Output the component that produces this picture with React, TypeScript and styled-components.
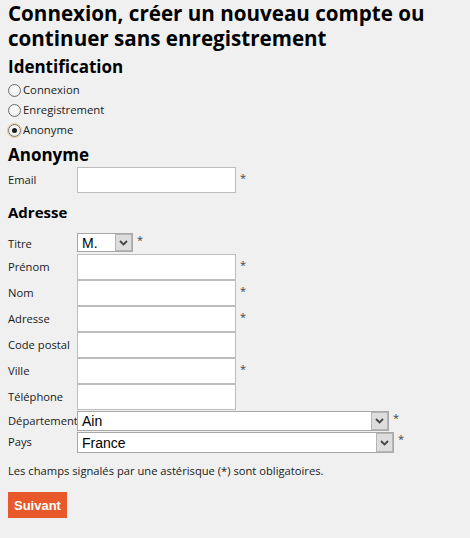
import React from "react";
import styled, { createGlobalStyle } from "styled-components";

const Global = createGlobalStyle`
  html, body { margin: 0; padding: 0; background: #f0f0f0; }
  body { font-family: "Open Sans", "Noto Sans", sans-serif; color: #1a1a1a; }
`;

const Page = styled.div`
  padding: 0 8px 20px 8px;
  width: 454px;
`;

const Title = styled.h1`
  margin: 0;
  padding-top: 1px;
  font-size: 20.6px;
  line-height: 25px;
  font-weight: 700;
  color: #000;
`;

const H2 = styled.h2<{ $size?: number; $mt?: number; $mb?: number }>`
  margin: ${(p) => p.$mt ?? 0}px 0 ${(p) => p.$mb ?? 0}px 0;
  font-size: ${(p) => p.$size ?? 17}px;
  line-height: 22px;
  font-weight: 700;
  color: #000;
`;

const RadioList = styled.div`
  display: flex;
  flex-direction: column;
  margin-top: 1px;
`;

const RadioRow = styled.label`
  display: flex;
  align-items: center;
  height: 20px;
  font-size: 11.3px;
  gap: 2px;
`;

const RadioDot = styled.span<{ $checked?: boolean }>`
  box-sizing: border-box;
  width: 13px;
  height: 13px;
  border-radius: 50%;
  border: 1px solid #6f6f6f;
  background: radial-gradient(circle at 50% 40%, #ffffff 0%, #f0f0f0 60%, #dadada 100%);
  display: inline-flex;
  align-items: center;
  justify-content: center;
  margin-top: 3px;
  outline: ${(p) => (p.$checked ? "1px solid #e2c391" : "none")};
  outline-offset: 0px;
  &::after {
    content: "";
    width: 5px;
    height: 5px;
    border-radius: 50%;
    background: #1b1b1b;
    display: ${(p) => (p.$checked ? "block" : "none")};
  }
`;

const Form = styled.div`
  display: grid;
  grid-template-columns: 69px auto;
  align-items: center;
`;

const Label = styled.div`
  font-size: 11.2px;
  line-height: 14px;
  white-space: nowrap;
`;

const Field = styled.div<{ $mt?: number; $mb?: number }>`
  display: flex;
  align-items: flex-start;
  margin-top: ${(p) => p.$mt ?? 0}px;
  margin-bottom: ${(p) => p.$mb ?? 0}px;
`;

const TextInput = styled.input`
  box-sizing: border-box;
  width: 159px;
  height: 26px;
  border: 1px solid #bdbdbd;
  background: #fff;
  margin: 0;
  padding: 0 3px;
  outline: none;
`;

const Star = styled.span<{ $top?: number }>`
  font-size: 11px;
  color: #444;
  margin-left: 4px;
  line-height: 14px;
  margin-top: ${(p) => p.$top ?? 4}px;
`;

const SelectBox = styled.div<{ $w: number; $h: number }>`
  box-sizing: border-box;
  width: ${(p) => p.$w}px;
  height: ${(p) => p.$h}px;
  display: flex;
  border: 1px solid #a8a8a8;
  background: #fff;
`;

const SelectValue = styled.div`
  flex: 1;
  font-family: "Liberation Sans", Arial, sans-serif;
  font-size: 14px;
  line-height: 16px;
  padding-left: 4px;
  display: flex;
  align-items: center;
  color: #000;
`;

const Arrow = styled.div`
  box-sizing: border-box;
  width: 17px;
  border: 1px solid #b5b5b5;
  background: #dddddd;
  display: flex;
  align-items: center;
  justify-content: center;
`;

const Note = styled.p`
  font-size: 11.2px;
  margin: 10px 0 0 0;
  line-height: 16px;
`;

const Button = styled.button`
  margin-top: 13px;
  background: #e8582a;
  color: #fff;
  border: none;
  font-family: "Liberation Sans", Arial, sans-serif;
  font-weight: 700;
  font-size: 13px;
  height: 26px;
  padding: 0 6px;
  cursor: pointer;
`;

const Chevron = () => (
  <svg width="9" height="6" viewBox="0 0 9 6">
    <path d="M1 1 L4.5 4.5 L8 1" fill="none" stroke="#444" strokeWidth="1.8" />
  </svg>
);

const Select = ({ value, w, h }: { value: string; w: number; h: number }) => (
  <SelectBox $w={w} $h={h}>
    <SelectValue>{value}</SelectValue>
    <Arrow>
      <Chevron />
    </Arrow>
  </SelectBox>
);

const Row = ({ label, star }: { label: string; star?: boolean }) => (
  <>
    <Label>{label}</Label>
    <Field>
      <TextInput type="text" />
      {star && <Star>*</Star>}
    </Field>
  </>
);

export default function App() {
  return (
    <>
      <Global />
      <Page>
        <Title>Connexion, créer un nouveau compte ou continuer sans enregistrement</Title>
        <H2 $size={17} $mt={5}>Identification</H2>
        <RadioList>
          <RadioRow>
            <RadioDot /> Connexion
          </RadioRow>
          <RadioRow>
            <RadioDot /> Enregistrement
          </RadioRow>
          <RadioRow>
            <RadioDot $checked /> Anonyme
          </RadioRow>
        </RadioList>
        <H2 $size={17} $mt={5} $mb={1}>Anonyme</H2>
        <Form>
          <Row label="Email" star />
        </Form>
        <H2 $size={15} $mt={8} $mb={10}>Adresse</H2>
        <Form>
          <Label>Titre</Label>
          <Field $mb={2}>
            <Select value="M." w={56} h={19} />
            <Star $top={0}>*</Star>
          </Field>
          <Row label="Prénom" star />
          <Row label="Nom" star />
          <Row label="Adresse" star />
          <Row label="Code postal" />
          <Row label="Ville" star />
          <Row label="Téléphone" />
          <Label>Département</Label>
          <Field $mt={1}>
            <Select value="Ain" w={312} h={20} />
            <Star $top={0}>*</Star>
          </Field>
          <Label>Pays</Label>
          <Field $mt={1}>
            <Select value="France" w={317} h={21} />
            <Star $top={0}>*</Star>
          </Field>
        </Form>
        <Note>Les champs signalés par une astérisque (*) sont obligatoires.</Note>
        <Button>Suivant</Button>
      </Page>
    </>
  );
}
